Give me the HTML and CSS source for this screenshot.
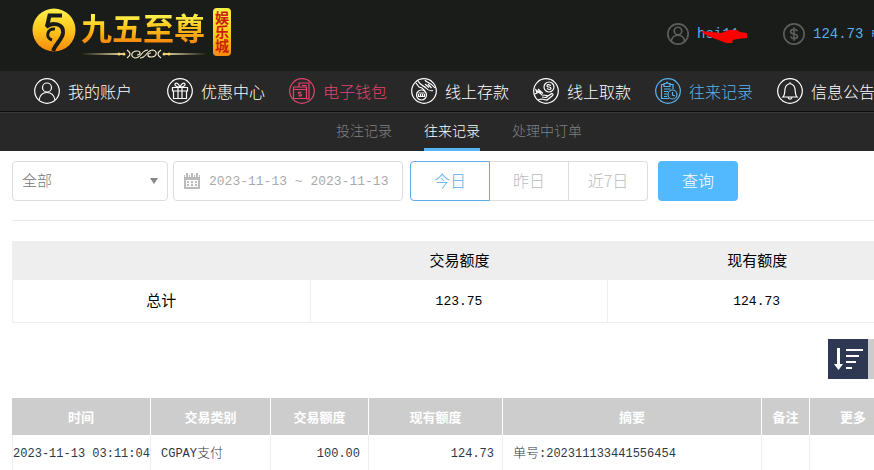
FILE: index.html
```html
<!DOCTYPE html>
<html lang="zh-CN">
  <head>
    <meta charset="UTF-8" />
    <meta name="viewport" content="width=device-width, initial-scale=1.0" />
    <title>往来记录</title>
    <link rel="stylesheet" href="styles.css">
  </head>
  <body>
    <div class="page">
      <header class="topbar">
        <a class="logo" href="#">
          <svg class="logo-mark" viewBox="0 0 44 44" aria-hidden="true">
            <defs>
              <linearGradient id="gold" x1="0" y1="0" x2="0" y2="1">
                <stop offset="0" stop-color="#fff04a" />
                <stop offset="0.5" stop-color="#ffc61c" />
                <stop offset="1" stop-color="#f58a0c" />
              </linearGradient>
            </defs>
            <circle cx="22" cy="22" r="21.500" fill="url(#gold)" />
            <path d="M30 7.500H17.500L15 18.500" fill="none" stroke="#191c18" stroke-width="4" />
            <path d="M14 19C20 14 32 15 31 25C30 32 24 35 21 43" fill="none" stroke="#191c18" stroke-width="4" />
            <path d="M23 21C15 20 13 30 20 32" fill="none" stroke="#191c18" stroke-width="3" />
          </svg>
          <span class="logo-text">
            <span class="logo-name">九五至尊</span>
            <svg class="logo-line" viewBox="0 0 126 12" aria-hidden="true">
              <path d="M0 6L44 5V7ZM126 6L82 5V7Z" fill="#e9d9a0" />
              <g fill="#f5d36a"><circle cx="38" cy="6" r="1.500" /><circle cx="43" cy="6" r="1.500" /><circle cx="83" cy="6" r="1.500" /><circle cx="88" cy="6" r="1.500" /></g>
              <path d="M46 2Q52 6 46 10M80 2Q74 6 80 10M67 2C60 2 61 10 54 10C49 9 50 3 56 3C60 3 60 7 56 7M59 10C66 10 65 2 72 2C77 3 76 9 70 9C66 9 66 5 70 5" fill="none" stroke="#f6ecc8" stroke-width="1.200" />
            </svg>
          </span>
          <span class="logo-badge">娱乐城</span>
        </a>
        <div class="account">
          <a class="user" href="#">
            <svg class="icon-small" viewBox="0 0 26 26" aria-hidden="true"><circle cx="13" cy="13" r="12" /><circle cx="13" cy="9.500" r="4.500" /><path d="M5 21.500C6 16 9 14.500 13 14.500S20 16 21 21.500" /></svg>
            <span class="user-name">hsi11
              <svg class="scribble" viewBox="0 0 46 16" aria-hidden="true"><path d="M0 3L10 4L20 5L28 2L36 2L39 4L46 5V10L36 11L32 12L31 15L25 15L20 13L12 10L5 7Z" fill="#ff0000" /></svg>
            </span>
          </a>
          <a class="balance" href="#">
            <svg class="icon-small" viewBox="0 0 26 26" aria-hidden="true"><circle cx="13" cy="13" r="12" /><path d="M17 9.500Q16 7.500 13 7.500Q9 7.500 9 10Q9 12.500 13 13Q17 13.500 17 16Q17 18.500 13 18.500Q10 18.500 9 16M13 5V21" /></svg>
            <span>124.73</span>
            <small>RMB</small>
          </a>
        </div>
      </header>

      <nav class="main-nav">
        <a href="#">
          <svg class="icon" viewBox="0 0 26 26" aria-hidden="true"><circle cx="13" cy="13" r="12.300" /><circle cx="13" cy="9.500" r="4.500" /><path d="M5 22C6 16.500 9 14.500 13 14.500S20 16.500 21 22" /></svg>
          我的账户
        </a>
        <a href="#">
          <svg class="icon" viewBox="0 0 26 26" aria-hidden="true"><circle cx="13" cy="13" r="12.300" /><path d="M5.500 9.500H20.500V13H5.500ZM6.500 13V20.500H19.500V13M11 9.500V20.500M15 9.500V20.500M13 9.500C9 8.500 7.500 7.500 8 6C9 4 12 5.500 13 9.500C14 5.500 17 4 18 6C18.500 7.500 17 8.500 13 9.500" /></svg>
          优惠中心
        </a>
        <a class="hot" href="#">
          <svg class="icon" viewBox="0 0 26 26" aria-hidden="true"><circle cx="13" cy="13" r="12.300" /><path d="M10 9V5H20V21H17.500M13 7.500H17.500M4.500 9H17.500V20.500H4.500ZM4.500 11.500H17.500M12.500 14.500Q9.500 13.500 9.500 15Q9.500 16 11 16Q12.500 16.500 12.500 17.500Q11.500 18.500 9.500 17.500" /></svg>
          电子钱包
        </a>
        <a href="#">
          <svg class="icon" viewBox="0 0 26 26" aria-hidden="true"><circle cx="13" cy="13" r="12.300" /><circle cx="10.500" cy="17" r="5" /><path d="M7.500 16V18.500H13.500V16M9.500 16V18.500M11.500 16V18.500M7.500 15H13.500M7 3C9 7 13 8 15 10C17 12.500 20 13 22 12.500M14 2C15 5 20 4 24 10M14 6L18 9.500M17 6L20.500 10M5 5L8 9L11 10L14 13" /></svg>
          线上存款
        </a>
        <a href="#">
          <svg class="icon" viewBox="0 0 26 26" aria-hidden="true"><circle cx="13" cy="13" r="12.300" /><circle cx="16" cy="9" r="5" /><path d="M18 7.500Q14 5.500 14 8Q14 9 16 9Q18 9 18 10.500Q17 12.500 14 10.500M2 16L6 14L9 17L14 17.500Q15 19.500 12 19.500L9 19M14 18.500L19 15.500Q21 16 19 18L14 22L8 21L5 22M4 15L3 12L8 16M8 16L5 11L10 15.500" /></svg>
          线上取款
        </a>
        <a class="current" href="#">
          <svg class="icon" viewBox="0 0 26 26" aria-hidden="true"><circle cx="13" cy="13" r="12.300" /><path d="M14 20.500H6.500V6.500H9M15 6.500H18V11M9 8.500V5.500H11Q12 2.500 13 5.500H15V8.500ZM9 11H15.500M9 13.500H13M9 16H12M9 18.500H12" /><circle cx="17.500" cy="16.500" r="4.500" /><path d="M17.500 14V17L20 18" /></svg>
          往来记录
        </a>
        <a href="#">
          <svg class="icon" viewBox="0 0 26 26" aria-hidden="true"><circle cx="13" cy="13" r="12.300" /><path d="M6 19C8 17 7.500 15 8 11C8.500 8 10 6.500 12 6Q13 3.500 14 6C16 6.500 17.500 8 18 11C18.500 15 18 17 20 19ZM11 19.500Q13 23 15 19.500" /></svg>
          信息公告
        </a>
      </nav>

      <nav class="sub-nav">
        <a href="#">投注记录</a>
        <a class="active" href="#">往来记录</a>
        <a href="#">处理中订单</a>
      </nav>

      <main>
        <form class="filters">
          <div class="select-box">
            <select aria-label="交易类别">
              <option>全部</option>
            </select>
          </div>
          <label class="date-box">
            <svg viewBox="0 0 18 18" aria-hidden="true"><path d="M1 3H17V17H1Z" fill="#bbb" /><path d="M3 8H15V15H3Z" fill="#fff" /><path d="M4 0V5M9 0V5M14 0V5" stroke="#fff" stroke-width="4" /><path d="M4 1V5M9 1V5M14 1V5" stroke="#bbb" stroke-width="2" /><path d="M4 10H14M4 13H14" stroke="#bbb" stroke-width="2" stroke-dasharray="2 2" /></svg>
            <input type="text" value="2023-11-13 ~ 2023-11-13" aria-label="日期" readonly />
          </label>
          <div class="range">
            <button type="button" class="selected">今日</button>
            <button type="button">昨日</button>
            <button type="button">近7日</button>
          </div>
          <button type="submit" class="query">查询</button>
        </form>

        <table class="summary">
          <thead>
            <tr><th></th><th>交易额度</th><th>现有额度</th></tr>
          </thead>
          <tbody>
            <tr>
              <td>总计</td>
              <td><span class="amount">123.75</span></td>
              <td><span class="amount">124.73</span></td>
            </tr>
          </tbody>
        </table>

        <div class="sort">
          <button type="button" class="on" aria-label="降序">
            <svg viewBox="0 0 40 40" aria-hidden="true"><path d="M9 9H12V25H15L10.500 31L6 25H9ZM18 10H35V12H18ZM18 16H31V18H18ZM18 22H28V24H18ZM18 28H24V30H18Z" fill="#fff" /></svg>
          </button>
          <button type="button" aria-label="升序"></button>
        </div>

        <table class="records">
          <colgroup>
            <col class="col-time" /><col class="col-type" /><col class="col-amount" /><col class="col-balance" /><col /><col class="col-note" /><col class="col-more" />
          </colgroup>
          <thead>
            <tr><th>时间</th><th>交易类别</th><th>交易额度</th><th>现有额度</th><th>摘要</th><th>备注</th><th>更多</th></tr>
          </thead>
          <tbody>
            <tr>
              <td class="time"><span class="code">2023-11-13 03:11:04</span></td>
              <td><span class="code">CGPAY</span>支付</td>
              <td class="right"><span class="code">100.00</span></td>
              <td class="right"><span class="code">124.73</span></td>
              <td>单号<span class="code">:202311133441556454</span></td>
              <td></td>
              <td></td>
            </tr>
          </tbody>
        </table>
      </main>
    </div>
  </body>
</html>
```
FILE: styles.css
```css
* {
  box-sizing: border-box;
}

body {
  margin: 0;
  overflow: hidden;
  background: #fff;
  color: #000;
  font-family: "Noto Sans CJK SC", sans-serif;
  font-size: 16px;
  font-weight: 300;
}

a {
  color: inherit;
  text-decoration: none;
}

button,
input,
select {
  font: inherit;
}

.page {
  min-width: 918px;
}

/* top bar */
.topbar {
  display: flex;
  justify-content: space-between;
  height: 71px;
  padding-left: 32px;
  background: #191c18;
}

.logo {
  display: flex;
  align-items: flex-start;
  padding-top: 8px;
}

.logo-mark {
  width: 44px;
  height: 44px;
}

.logo-text {
  display: flex;
  flex-direction: column;
  margin-left: 5px;
}

.logo-name {
  font-size: 31px;
  font-weight: 700;
  line-height: 38px;
  color: transparent;
  background: linear-gradient(#fff04a 20%, #ffc61c 50%, #f58a0c 90%);
  background-clip: text;
  -webkit-background-clip: text;
}

.logo-line {
  width: 126px;
  height: 16px;
}

.logo-badge {
  width: 18px;
  height: 48px;
  margin-left: 6px;
  border-radius: 4px;
  background: linear-gradient(#fff04a, #ffc61c 60%, #f58a0c);
  color: #c81e0a;
  font-size: 14px;
  font-weight: 700;
  line-height: 18px;
  text-align: center;
  writing-mode: vertical-rl;
}

.account {
  display: flex;
  width: 251px;
  padding-bottom: 3px;
  color: #58aee8;
  font-family: "Liberation Mono", monospace;
  font-size: 14px;
}

.account a {
  display: flex;
  align-items: center;
  gap: 8px;
}

.account .user {
  width: 116px;
}

.account small {
  font-size: 10px;
}

.user-name {
  position: relative;
}

.scribble {
  position: absolute;
  top: 2px;
  left: 4px;
  width: 46px;
  height: 16px;
}

.icon,
.icon-small {
  flex: none;
  fill: none;
  stroke: currentColor;
}

.icon-small {
  width: 22px;
  height: 22px;
  color: #5c5e5b;
  stroke-width: 2;
}

/* navigation */
.main-nav {
  display: flex;
  gap: 24px;
  height: 41px;
  padding-left: 34px;
  border-bottom: 1px solid #0c0c0c;
  background: #282828;
  color: #fff;
  line-height: 38px;
  white-space: nowrap;
}

.main-nav a {
  display: flex;
  align-items: center;
  gap: 8px;
}

.main-nav a:first-child {
  width: 109px;
}

.icon {
  width: 26px;
  height: 26px;
  stroke-width: 1.2;
}

.hot {
  color: #e2446c;
}

.current {
  color: #58b4ee;
}

.sub-nav {
  display: flex;
  justify-content: center;
  gap: 32px;
  height: 39px;
  border-top: 1px solid #383838;
  background: #282828;
  color: #808080;
  font-size: 14px;
  line-height: 34px;
}

.sub-nav .active {
  border-bottom: 3px solid #58b4f4;
  color: #fff;
}

main {
  padding: 10px 12px;
}

/* filters */
.filters {
  display: flex;
  height: 60px;
  border-bottom: 1px solid #e8e8e8;
}

.select-box,
.date-box {
  display: flex;
  align-items: center;
  height: 40px;
  border: 1px solid #ddd;
  border-radius: 4px;
}

.select-box {
  position: relative;
  width: 156px;
  margin-right: 5px;
}

.select-box::after {
  content: "";
  position: absolute;
  right: 9px;
  border: 4px solid transparent;
  border-top: 6px solid #888;
  border-bottom: 0;
  pointer-events: none;
}

.select-box select {
  width: 100%;
  height: 38px;
  padding: 0 9px 3px;
  border: 0;
  background: transparent;
  color: #777;
  font-size: 15px;
  appearance: none;
}

.date-box {
  gap: 8px;
  width: 230px;
  margin-right: 7px;
  padding-left: 9px;
}

.date-box svg {
  flex: none;
  width: 18px;
  height: 18px;
}

.date-box input {
  width: 190px;
  padding: 0;
  border: 0;
  outline: 0;
  color: #aaa;
  font-family: "Liberation Mono", monospace;
  font-size: 13px;
}

.range {
  display: flex;
  margin-right: 10px;
}

.range button,
.query {
  width: 80px;
  height: 40px;
  padding: 0 0 2px;
}

.range button {
  border: 1px solid #ddd;
  background: #fff;
  color: #bbb;
}

.range button + button {
  width: 79px;
  border-left: 0;
}

.range button:first-child {
  border-radius: 4px 0 0 4px;
}

.range button:last-child {
  border-radius: 0 4px 4px 0;
}

.range .selected {
  border-color: #58aee8;
  color: #58aee8;
}

.query {
  border: 0;
  border-radius: 4px;
  background: #52b9ff;
  color: #fff;
}

/* tables */
table {
  border-spacing: 0;
  table-layout: fixed;
}

.summary {
  width: 100%;
  margin-top: 20px;
  border-left: 1px solid #eee;
  font-size: 15px;
  font-weight: 400;
  line-height: 20px;
  text-align: center;
}

.summary th {
  height: 39px;
  padding: 0 0 2px;
  background: #eee;
  font-weight: 400;
}

.summary td {
  height: 43px;
  padding: 0 0 2px;
  border-right: 1px solid #eee;
  border-bottom: 1px solid #eee;
}

.amount {
  font-family: "Liberation Mono", monospace;
  font-size: 13px;
}

.sort {
  display: flex;
  justify-content: flex-end;
  margin-top: 16px;
}

.sort button {
  width: 38px;
  height: 40px;
  padding: 0;
  border: 0;
  background: #ccc;
}

.sort .on {
  width: 40px;
  background: #2e3852;
}

.sort svg {
  display: block;
}

.records {
  width: calc(100% - 9px);
  margin-top: 19px;
  font-size: 13px;
  line-height: 20px;
}

.records th {
  height: 37px;
  padding: 0;
  border-right: 1px solid #fff;
  background: #cdcdcd;
  color: #fff;
  font-weight: 700;
}

.records td {
  height: 36px;
  padding: 0 8px 0 10px;
  border-right: 1px solid #eee;
  border-bottom: 1px solid #eee;
  color: #2f3848;
  white-space: nowrap;
}

.records .time {
  padding: 0;
  border-left: 1px solid #eee;
  text-align: center;
}

.records .right {
  text-align: right;
}

.code {
  font-family: "Liberation Mono", monospace;
  font-size: 12px;
}

.col-time {
  width: 139px;
}

.col-type {
  width: 120px;
}

.col-amount {
  width: 98px;
}

.col-balance {
  width: 134px;
}

.col-note {
  width: 48px;
}

.col-more {
  width: 87px;
}
```
